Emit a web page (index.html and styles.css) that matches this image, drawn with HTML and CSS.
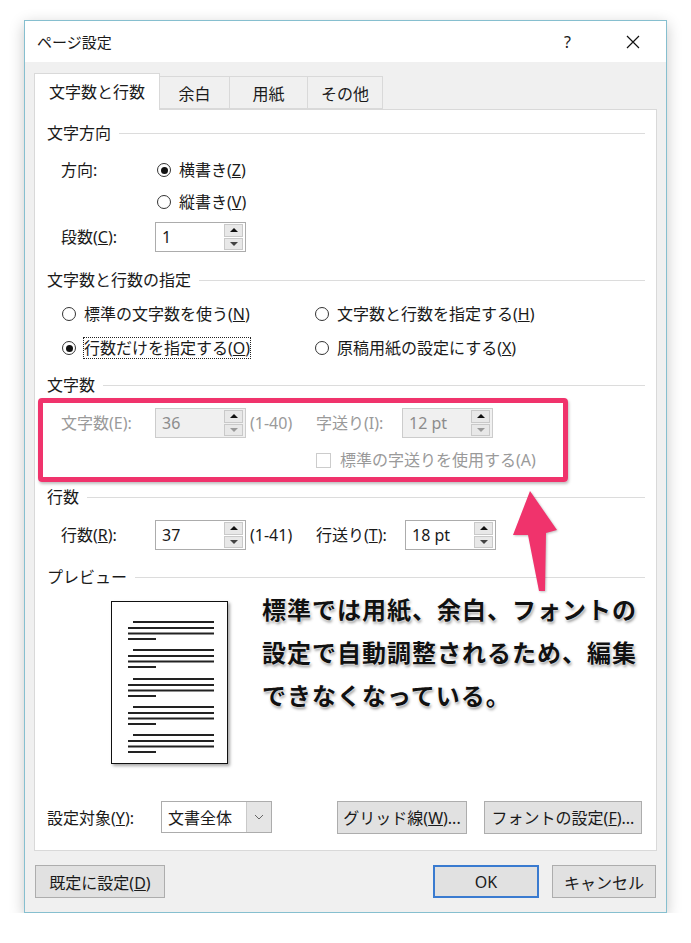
FILE: index.html
```html
<!DOCTYPE html>
<html lang="ja">
<head>
    <meta charset="UTF-8">
    <title>ページ設定</title>
    <link rel="stylesheet" href="styles.css">
</head>
<body>
    <div class="dialog">
        <div class="titlebar">
            <span class="title">ページ設定</span>
            <span class="help">?</span>
            <svg class="close" width="14" height="14" viewBox="0 0 14 14">
                <path d="M1 1L13 13M13 1L1 13" stroke="#111" stroke-width="1.2" fill="none"/>
            </svg>
        </div>

        <div class="dialog-body">
            <div class="tabs">
                <div class="tab active">文字数と行数</div>
                <div class="tab" style="width:70px">余白</div>
                <div class="tab" style="width:78px">用紙</div>
                <div class="tab" style="width:75px">その他</div>
            </div>

            <div class="panel">
                <div class="group-title g1">文字方向</div>

                <div class="field f-dir">
                    <span class="label">方向:</span>
                    <span class="opt"><i class="radio on"></i><span>横書き(<u>Z</u>)</span></span>
                </div>
                <div class="field f-vert">
                    <span class="opt"><i class="radio"></i><span>縦書き(<u>V</u>)</span></span>
                </div>
                <div class="field tall f-cols">
                    <span class="label">段数(<u>C</u>):</span>
                    <div class="spin"><span>1</span><span class="spin-btns"><i class="up"></i><i class="down"></i></span></div>
                </div>

                <div class="group-title g2">文字数と行数の指定</div>
                <div class="radio-grid">
                    <span class="opt"><i class="radio"></i><span>標準の文字数を使う(<u>N</u>)</span></span>
                    <span class="opt"><i class="radio"></i><span>文字数と行数を指定する(<u>H</u>)</span></span>
                    <span class="opt"><i class="radio on"></i><span class="focus">行数だけを指定する(<u>O</u>)</span></span>
                    <span class="opt"><i class="radio"></i><span>原稿用紙の設定にする(<u>X</u>)</span></span>
                </div>

                <div class="group-title g3">文字数</div>
                <div class="highlight">
                    <div class="field tall disabled">
                        <span class="label">文字数(E):</span>
                        <div class="spin off"><span>36</span><span class="spin-btns"><i class="up"></i><i class="down"></i></span></div>
                        <span class="range">(1-40)</span>
                        <span class="label2">字送り(I):</span>
                        <div class="spin off"><span>12 pt</span><span class="spin-btns"><i class="up"></i><i class="down"></i></span></div>
                    </div>
                    <div class="field disabled f-check">
                        <i class="checkbox"></i><span>標準の字送りを使用する(A)</span>
                    </div>
                </div>

                <div class="group-title g4">行数</div>
                <div class="field tall f-lines">
                    <span class="label">行数(<u>R</u>):</span>
                    <div class="spin"><span>37</span><span class="spin-btns"><i class="up"></i><i class="down"></i></span></div>
                    <span class="range">(1-41)</span>
                    <span class="label2 wide">行送り(<u>T</u>):</span>
                    <div class="spin"><span>18 pt</span><span class="spin-btns"><i class="up"></i><i class="down"></i></span></div>
                </div>

                <div class="group-title g5">プレビュー</div>
                <div class="preview">
                    <div class="page">
                        <svg width="115" height="161" viewBox="0 0 115 161">
                            <g stroke="#222" stroke-width="1.8">
                                <path d="M21 20H102M16 26H102M16 31.5H102M16 37H44"/>
                                <path d="M21 48H102M16 54H102M16 59.5H102M16 65H44"/>
                                <path d="M21 77H102M16 83H102M16 88.5H102M16 94H44"/>
                                <path d="M21 105H102M16 111H102M16 116.5H102M16 122H44"/>
                                <path d="M21 133H102M16 139H102M16 144.5H102M16 150H44"/>
                            </g>
                        </svg>
                    </div>
                    <p class="note">標準では用紙、余白、フォントの<br>設定で自動調整されるため、編集<br>できなくなっている。</p>
                </div>

                <div class="bottom-row">
                    <span class="target-label">設定対象(<u>Y</u>):</span>
                    <div class="select">
                        <span>文書全体</span>
                        <span class="select-arrow">
                            <svg width="10" height="6" viewBox="0 0 10 6"><path d="M1 1L5 5L9 1" stroke="#666" fill="none"/></svg>
                        </span>
                    </div>
                    <button class="btn grid-btn">グリッド線(<u>W</u>)...</button>
                    <button class="btn font-btn">フォントの設定(<u>F</u>)...</button>
                </div>

                <!-- 注釈の矢印 -->
                <svg class="arrow" width="60" height="110" viewBox="0 0 60 110">
                    <polygon points="19,2 46,41 35,44 34,102 28,102 17,46 2,46" fill="#f0336c"/>
                </svg>
            </div>

            <div class="footer">
                <button class="btn default-btn">既定に設定(<u>D</u>)</button>
                <button class="btn ok-btn">OK</button>
                <button class="btn cancel-btn">キャンセル</button>
            </div>
        </div>
    </div>
</body>
</html>
```

FILE: styles.css
```css
body {
    margin: 0;
    background: #ffffff;
    font-family: "Noto Sans", "Noto Sans CJK JP", sans-serif;
    color: #1a1a1a;
}

.dialog {
    margin: 20px 0 0 24px;
    width: 643px;
    height: 893px;
    box-sizing: border-box;
    border: 1px solid #86bfcf;
    box-shadow: 0 4px 14px rgba(0, 0, 0, 0.22);
    background: #f0f0f0;
    display: flex;
    flex-direction: column;
}

.titlebar {
    height: 41px;
    background: #ffffff;
    display: flex;
    align-items: center;
    padding-left: 12px;
}

.title {
    font-size: 15px;
    flex: 1;
}

.help {
    font-size: 16px;
    margin-right: 55px;
}

.close {
    margin-right: 26px;
}

.dialog-body {
    flex: 1;
    display: flex;
    flex-direction: column;
}

/* タブ */
.tabs {
    display: flex;
    align-items: flex-end;
    height: 33px;
    margin: 14px 0 0 9px;
    position: relative;
    z-index: 1;
}

.tab {
    height: 33px;
    box-sizing: border-box;
    border: 1px solid #d9d9d9;
    border-left: none;
    font-size: 16px;
    display: flex;
    align-items: center;
    justify-content: center;
    background: #f0f0f0;
}

.tab.active {
    width: 126px;
    height: 37px;
    margin-bottom: -1px;
    border-left: 1px solid #d9d9d9;
    border-bottom: none;
    background: #ffffff;
    padding-bottom: 2px;
}

.panel {
    position: relative;
    margin-left: 9px;
    width: 623px;
    height: 742px;
    box-sizing: border-box;
    border: 1px solid #d9d9d9;
    background: #ffffff;
    padding-top: 12px;
    font-size: 16px;
}

.group-title {
    display: flex;
    align-items: center;
    gap: 8px;
    height: 22px;
    line-height: 22px;
    padding: 0 11px 0 12px;
}

.group-title::after {
    content: '';
    flex: 1;
    height: 1px;
    background: #dcdcdc;
}

.g2 { margin-top: 17px; }
.g3 { margin-top: 15px; }
.g4 { margin-top: 15px; }
.g5 { margin-top: 16px; }

.field {
    display: flex;
    align-items: center;
    height: 22px;
    line-height: 22px;
    white-space: nowrap;
}

.field.tall {
    height: 30px;
}

.field .label {
    width: 94px;
    margin-left: 26px;
}

.f-dir { margin-top: 15px; }
.f-dir .opt { margin-left: 2px; }
.f-vert { margin-top: 10px; padding-left: 122px; }
.f-cols { margin-top: 9px; }
.f-lines { margin-top: 12px; }

.opt {
    display: flex;
    align-items: center;
    gap: 8px;
}

.radio {
    width: 14px;
    height: 14px;
    box-sizing: border-box;
    border: 1px solid #333;
    border-radius: 50%;
    display: flex;
    align-items: center;
    justify-content: center;
}

.radio.on::before {
    content: '';
    width: 7px;
    height: 7px;
    border-radius: 50%;
    background: #111;
}

.focus {
    outline: 1px dotted #222;
    line-height: 20px;
}

.radio-grid {
    display: grid;
    grid-template-columns: 253px auto;
    row-gap: 12px;
    margin: 12px 0 0 27px;
    line-height: 22px;
    white-space: nowrap;
}

/* スピンボックス */
.spin {
    width: 91px;
    height: 30px;
    box-sizing: border-box;
    border: 1px solid #acacac;
    background: #ffffff;
    display: flex;
    align-items: center;
    justify-content: space-between;
    padding-left: 6px;
}

.spin-btns {
    display: flex;
    flex-direction: column;
    gap: 1px;
    width: 19px;
    height: 26px;
    margin-right: 2px;
}

.spin-btns i {
    flex: 1;
    display: flex;
    align-items: center;
    justify-content: center;
    background: #e8e8e8;
    border: 1px solid #c9c9c9;
}

.spin-btns .up::before {
    content: '';
    border-left: 4px solid transparent;
    border-right: 4px solid transparent;
    border-bottom: 4px solid #111;
}

.spin-btns .down::before {
    content: '';
    border-left: 4px solid transparent;
    border-right: 4px solid transparent;
    border-top: 4px solid #444;
}

.spin.off {
    background: #f0f0f0;
    border-color: #cccccc;
    color: #8c8c8c;
}

.spin.off .spin-btns .down::before {
    border-top-color: #999;
}

.range {
    margin-left: 4px;
    width: 66px;
}

.label2 {
    width: 86px;
}

.label2.wide {
    width: 89px;
}

.disabled {
    color: #9a9a9a;
}

.highlight {
    position: relative;
    margin-top: 12px;
}

.highlight::after {
    content: '';
    position: absolute;
    left: 3px;
    top: -10px;
    width: 530px;
    height: 84px;
    box-sizing: border-box;
    border: 5px solid #f0336c;
    border-radius: 4px;
    box-shadow: 1px 2px 3px rgba(0, 0, 0, 0.25);
}

.f-check {
    margin-top: 11px;
    padding-left: 281px;
}

.checkbox {
    width: 15px;
    height: 15px;
    box-sizing: border-box;
    border: 1px solid #cccccc;
    background: #ffffff;
    margin-right: 9px;
}

/* プレビュー */
.preview {
    display: flex;
    align-items: flex-start;
    margin-top: 13px;
    height: 163px;
}

.page {
    margin-left: 76px;
    width: 117px;
    height: 163px;
    box-sizing: border-box;
    border: 1px solid #111;
    background: #ffffff;
    box-shadow: 2px 2px 3px rgba(0, 0, 0, 0.35);
}

.page svg {
    display: block;
}

.note {
    margin: -14px 0 0 34px;
    font-family: "Noto Sans CJK JP", sans-serif;
    font-size: 24px;
    font-weight: bold;
    letter-spacing: 1px;
    line-height: 43px;
    white-space: nowrap;
    color: #111;
    text-shadow: 0 0 2px #fff, 0 0 2px #fff, 1px 2px 3px rgba(0, 0, 0, 0.45);
}

.bottom-row {
    display: flex;
    align-items: center;
    height: 32px;
    margin-top: 37px;
    white-space: nowrap;
}

.target-label {
    width: 114px;
    margin-left: 12px;
}

.select {
    width: 111px;
    height: 32px;
    box-sizing: border-box;
    border: 1px solid #acacac;
    display: flex;
    align-items: center;
    justify-content: space-between;
    padding-left: 6px;
}

.select-arrow {
    width: 24px;
    height: 30px;
    background: #e5e5e5;
    border-left: 1px solid #c9c9c9;
    display: flex;
    align-items: center;
    justify-content: center;
}

.btn {
    height: 33px;
    box-sizing: border-box;
    border: 1px solid #adadad;
    background: #e1e1e1;
    font-family: inherit;
    font-size: 16px;
    color: #1a1a1a;
    padding: 0;
}

.grid-btn {
    margin-left: 65px;
    width: 130px;
}

.font-btn {
    margin-left: 17px;
    width: 158px;
}

.arrow {
    position: absolute;
    left: 476px;
    top: 379px;
    filter: drop-shadow(1px 1px 1px rgba(0, 0, 0, 0.25));
}

.footer {
    display: flex;
    padding: 14px 10px 0 10px;
}

.default-btn {
    width: 130px;
}

.ok-btn {
    margin-left: auto;
    width: 106px;
    border: 2px solid #3a7bd0;
}

.cancel-btn {
    margin-left: 13px;
    width: 104px;
}
```
